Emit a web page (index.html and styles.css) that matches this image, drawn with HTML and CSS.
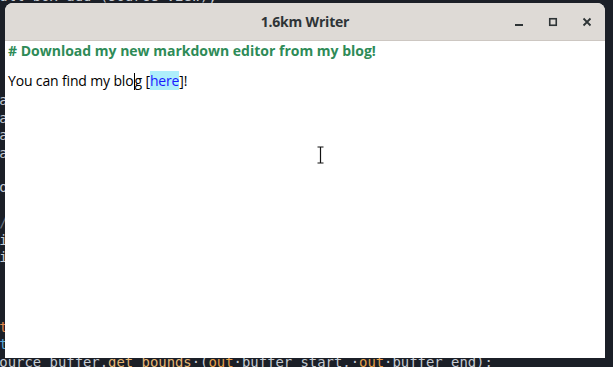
FILE: index.html
```html
<!DOCTYPE html>
<html lang="en">
<head>
    <meta charset="UTF-8">
    <title>1.6km Writer</title>
    <link rel="stylesheet" href="styles.css">
</head>
<body>
    <!-- code editor behind the window -->
    <pre class="backdrop">full_box_add (source_view);





 a
 a
 a
 a

 o

<span class="dim"> /</span>
 i
 i



<span class="orange"> t</span>
<span class="blue"> t</span>
source_buffer.<span class="fn">get_bounds</span>·(<span class="kw">out</span>·buffer_start,·<span class="kw">out</span>·buffer_end);</pre>

    <div class="window">
        <header class="titlebar">
            <span class="title">1.6km Writer</span>
            <div class="controls">
                <svg width="10" height="10" viewBox="0 0 10 10"><rect x="1" y="7" width="8" height="2" fill="#2e3436"/></svg>
                <svg width="10" height="10" viewBox="0 0 10 10"><rect x="1.75" y="1.75" width="6.5" height="6.5" fill="none" stroke="#2e3436" stroke-width="1.6"/></svg>
                <svg width="10" height="10" viewBox="0 0 10 10"><path d="M1.5 1.5 L8.5 8.5 M8.5 1.5 L1.5 8.5" stroke="#2e3436" stroke-width="1.8"/></svg>
            </div>
        </header>
        <div class="editor">
            <p class="heading"># Download my new markdown editor from my blog!</p>
            <p class="body">You can find my blo<span class="caret"></span>g [<span class="link">here</span>]!</p>
        </div>
        <svg class="ibeam" width="9" height="18" viewBox="0 0 9 18">
            <path d="M1.5 1 H7.5 M4.5 1 V17 M1.5 17 H7.5" stroke="#fff" stroke-width="3"/>
            <path d="M1.5 1 H7.5 M4.5 1 V17 M1.5 17 H7.5" stroke="#111" stroke-width="1.2"/>
        </svg>
    </div>
</body>
</html>
```

FILE: styles.css
```css
/* Desktop */
body {
    margin: 0;
    width: 613px;
    height: 367px;
    overflow: hidden;
    background-color: #1b1f27;
    position: relative;
}

.backdrop {
    margin: 0;
    position: absolute;
    left: -9px;
    top: -12px;
    font-family: "DejaVu Sans Mono", monospace;
    font-size: 13.9px;
    line-height: 17.4px;
    color: #c5cbd3;
}

.backdrop .dim { color: #6b7380; }
.backdrop .orange { color: #e0864a; }
.backdrop .blue { color: #5aa8d8; }
.backdrop .fn { color: #e6b673; }
.backdrop .kw { color: #e6a04a; }

/* Window */
.window {
    position: absolute;
    left: 5px;
    top: 3px;
    width: 600px;
    height: 355px;
    background-color: #fff;
    border-radius: 8px 8px 0 0;
    overflow: hidden;
    display: flex;
    flex-direction: column;
}

.titlebar {
    height: 37px;
    background-color: #dedad6;
    border-bottom: 1px solid #cdc7c2;
    display: flex;
    align-items: center;
    justify-content: center;
    position: relative;
    flex-shrink: 0;
}

.title {
    font-family: "Open Sans", sans-serif;
    font-weight: bold;
    font-size: 14px;
    color: #2e3436;
    letter-spacing: -0.2px;
}

.controls {
    position: absolute;
    right: 13px;
    top: 14px;
    display: flex;
    gap: 24px;
}

/* Editor */
.editor {
    flex: 1;
    padding: 0 3px;
}

.editor p {
    margin: 0;
}

.heading {
    font-family: "Open Sans", sans-serif;
    font-weight: bold;
    font-size: 14px;
    color: #2e8b57;
    line-height: 19px;
}

.body {
    margin-top: 12px !important;
    font-family: "Open Sans", sans-serif;
    font-size: 14px;
    color: #000;
    line-height: 18px;
    letter-spacing: -0.15px;
}

.caret {
    display: inline-block;
    width: 1px;
    height: 17px;
    background-color: #000;
    vertical-align: -4px;
}

.link {
    color: #1a1aff;
    background-color: #aeeefb;
}

.ibeam {
    position: absolute;
    left: 311px;
    top: 143px;
}
```
